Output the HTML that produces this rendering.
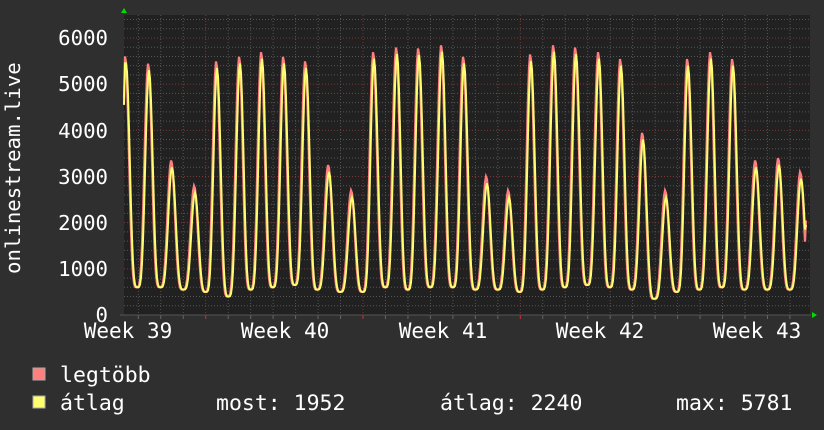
<!DOCTYPE html>
<html><head><meta charset="utf-8"><style>
html,body{margin:0;padding:0;background:#2f2f2f;width:824px;height:430px;overflow:hidden}
svg{display:block}
text{font-family:"DejaVu Sans Mono","Liberation Mono",monospace;fill:#fff}
</style></head><body>
<svg id="s" width="824" height="430" xmlns="http://www.w3.org/2000/svg">
<rect x="0" y="0" width="824" height="430" fill="#2f2f2f"/>
<rect x="124" y="15" width="686" height="300" fill="#212121"/>
<g id="grid"></g>
<path id="red" fill="none" stroke="#ff7f7f" stroke-width="2.2"/>
<path id="yel" fill="none" stroke="#ffff70" stroke-width="2"/>
<line x1="120" y1="315" x2="811" y2="315" stroke="#555" stroke-width="1"/>
<polygon points="121,13 127,13 124,8" fill="#00dd00"/>
<polygon points="812,312 812,318 817,315" fill="#00dd00"/>
<g font-size="20.7" text-anchor="end">
<text x="108" y="45">6000</text>
<text x="108" y="91">5000</text>
<text x="108" y="138">4000</text>
<text x="108" y="184">3000</text>
<text x="108" y="230">2000</text>
<text x="108" y="276">1000</text>
<text x="108" y="322">0</text>
</g>
<g font-size="21" text-anchor="middle">
<text x="128" y="338">Week 39</text>
<text x="285" y="338">Week 40</text>
<text x="443" y="338">Week 41</text>
<text x="600" y="338">Week 42</text>
<text x="757" y="338">Week 43</text>
</g>
<text font-size="20.7" transform="translate(20,274) rotate(-90)">onlinestream.live</text>
<rect x="33" y="368" width="12" height="12" fill="#ff7f7f" stroke="#aaa" stroke-width="1"/>
<rect x="33" y="396" width="12" height="12" fill="#ffff70" stroke="#aaa" stroke-width="1"/>
<g font-size="21.5">
<text x="60" y="382">legtöbb</text>
<text x="60" y="410">átlag</text>
<text x="216" y="410">most: 1952</text>
<text x="440" y="410">átlag: 2240</text>
<text x="676" y="410">max: 5781</text>
</g>
</svg>
<script>
var g=document.getElementById("grid"),h="";
function Y(v){return 315-v*0.04617;}
for(var v=200;v<=6400;v+=200){var y=Y(v);if(y<15)break;var maj=v%1000==0;
h+='<line x1="124" x2="810" y1="'+y+'" y2="'+y+'" stroke="'+(maj?'#7a3838':'#555')+'" stroke-width="1" stroke-dasharray="1,2"/>';}
for(var x=138.3;x<810;x+=22.47){var d=Math.round((x-206.7)/22.47);var maj=(d%7==0);
h+='<line y1="15" y2="315" x1="'+x+'" x2="'+x+'" stroke="'+(maj?'#7a3838':'#555')+'" stroke-width="1" stroke-dasharray="1,2"/>';
h+='<line y1="315" y2="319" x1="'+x+'" x2="'+x+'" stroke="'+(maj?'#c33':'#666')+'"/>';}
g.innerHTML=h;
var P=[[126,5600],[149,5450],[172,3350],[195,2800],[217,5500],[240,5600],[262,5700],[284,5600],[306,5500],[329,3250],[352,2700],[374,5700],[397,5800],[419,5780],[442,5850],[464,5600],[487,3000],[509,2700],[531,5650],[554,5850],[576,5800],[599,5700],[621,5550],[643,3950],[666,2700],[688,5550],[711,5700],[733,5550],[756,3350],[779,3400],[801,3100],[824,5000]];
var T=[600,600,600,550,500,400,550,600,650,550,500,500,600,550,600,600,550,550,500,550,600,650,600,550,350,500,550,600,550,550,550,600];
function val(x,off){var i=0;while(i<P.length-1&&P[i+1][0]<x)i++;
var a=P[i],b=P[i+1]||P[i];var w=b[0]-a[0]||22;var t=(x-a[0])/w;if(t<0)t=0;
var tr=T[i+1]||550;var c=2*Math.abs(t-0.5);
var pk=(t<0.5?a[1]:b[1])+off;var f=Math.pow((1-Math.cos(Math.PI*c))/2,2);
return tr+(pk-tr)*f;}
function path(off,sh,endv){var s="";for(var x=124;x<=805;x+=1){var v=val(x+sh,off);if(x==124)v=4700+off;s+=(x==124?"M":"L")+x+","+Y(v).toFixed(1);}
return s+"L806,"+Y(endv).toFixed(1);}
document.getElementById("red").setAttribute("d",path(0,0.8,2050));
document.getElementById("yel").setAttribute("d",path(-150,0,1952));
</script>
</body></html>
